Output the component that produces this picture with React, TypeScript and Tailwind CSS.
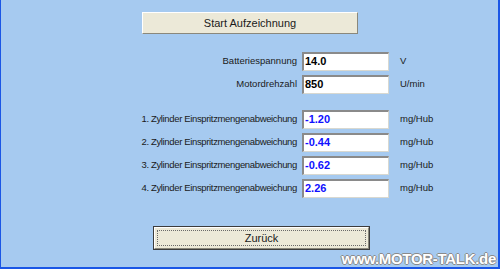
import React from "react";

const font = { fontFamily: '"Liberation Sans", Arial, sans-serif' };

type Row = { label: string; value: string; unit: string; blue?: boolean };

const topRows: Row[] = [
  { label: "Batteriespannung", value: "14.0", unit: "V" },
  { label: "Motordrehzahl", value: "850", unit: "U/min" },
];

const cylRows: Row[] = [
  { label: "1. Zylinder Einspritzmengenabweichung", value: "-1.20", unit: "mg/Hub", blue: true },
  { label: "2. Zylinder Einspritzmengenabweichung", value: "-0.44", unit: "mg/Hub", blue: true },
  { label: "3. Zylinder Einspritzmengenabweichung", value: "-0.62", unit: "mg/Hub", blue: true },
  { label: "4. Zylinder Einspritzmengenabweichung", value: "2.26", unit: "mg/Hub", blue: true },
];

function ValueRow({ row, labelSize }: { row: Row; labelSize: string }) {
  return (
    <div className="flex h-[19px] items-center">
      {/* label column ends right at x=298 */}
      <div className={`w-[297px] pr-[1px] text-right text-[#1a1a1a] ${labelSize}`}>{row.label}</div>
      <div className="ml-[4px] flex h-[19px] w-[87px] items-start border-t-2 border-l-2 border-r border-b border-t-[#8a8a8a] border-l-[#8a8a8a] border-r-[#d8d8d0] border-b-[#d8d8d0] bg-white pl-[1px] pt-[1px]">
        <span className={`text-[11px] leading-[13px] font-bold ${row.blue ? "text-[#1010ff]" : "text-black"}`}>{row.value}</span>
      </div>
      <div className="ml-[11px] text-[9.5px] text-[#1a1a1a]">{row.unit}</div>
    </div>
  );
}

export default function App() {
  return (
    <div
      className="relative h-[269px] w-[500px] overflow-hidden border-l border-r-2 border-b-2 border-[#1a56e6] bg-[#a6caf0]"
      style={font}
    >
      <div className="flex flex-col">
        {/* Start button */}
        <button className="ml-[141px] mt-[12px] h-[22px] w-[216px] border border-t-white border-l-white border-r-[#8a887c] border-b-[#8a887c] bg-[#ece9d8] text-[11px] text-[#1a1a1a]">
          Start Aufzeichnung
        </button>

        {/* Battery + RPM */}
        <div className="mt-[18px] flex flex-col gap-[4px]">
          {topRows.map((r) => (
            <ValueRow key={r.label} row={r} labelSize="text-[9.5px]" />
          ))}
        </div>

        {/* Cylinder deviations */}
        <div className="mt-[16px] flex flex-col gap-[4px]">
          {cylRows.map((r) => (
            <ValueRow key={r.label} row={r} labelSize="text-[9.5px] tracking-[-0.35px]" />
          ))}
        </div>

        {/* Zurück button (default, focused) */}
        <div className="ml-[152px] mt-[28px] h-[24px] w-[217px] border border-[#3c3c3c] p-0">
          <button className="flex h-full w-full items-center justify-center border border-t-white border-l-white border-r-[#8a887c] border-b-[#8a887c] bg-[#ece9d8] p-[2px]">
            <span className="flex h-full w-full items-center justify-center border border-dotted border-[#6a6a6a] text-[11px] text-[#1a1a1a]">
              Zurück
            </span>
          </button>
        </div>
      </div>

      {/* watermark */}
      <div className="pointer-events-none absolute bottom-[0px] right-[2px] text-[15px] leading-[16px] font-black tracking-[-0.3px] text-white [text-shadow:-1px_0_#8a8a8a,1px_0_#8a8a8a,0_-1px_#8a8a8a,0_1px_#8a8a8a]">
        www.MOTOR-TALK.de
      </div>
    </div>
  );
}
